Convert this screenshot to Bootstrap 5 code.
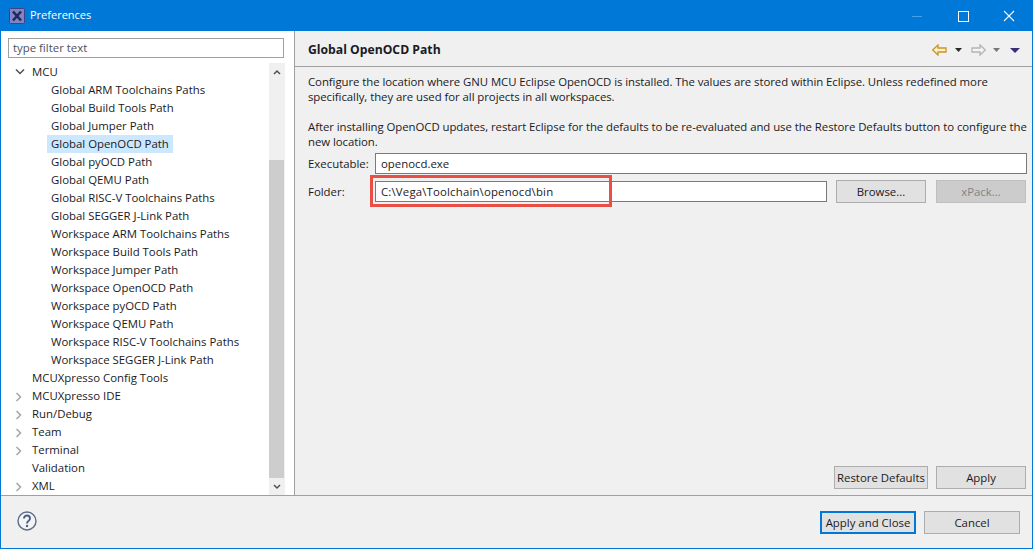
<!DOCTYPE html>
<html><head><meta charset="utf-8">
<link rel="stylesheet" href="https://cdn.jsdelivr.net/npm/bootstrap@5.3.0/dist/css/bootstrap.min.css">
<style>
html,body{height:100%;margin:0}
body{background:#f0f0f0;font-family:"Open Sans","Noto Sans",sans-serif;font-size:11.4px;line-height:18px;color:#1a1a24}
.win{width:1033px;height:549px;border:1px solid #0078d7;border-top:0;overflow:hidden}
.titlebar{height:31px;background:#0078d7;color:#fff;padding-left:8px;gap:5px;flex:none}
.titletxt{font-size:11px;margin-top:-1px}
.winbtns{margin-left:auto}
.winbtn{width:46px;height:31px}
.main{height:465px;border-bottom:1px solid #a0a0a0;flex:none}
.leftp{width:294px;background:#fff;padding:7px 9px 0 7px;border-right:1px solid #a0a0a0;flex:none}
.filter{height:20px;border:1px solid #a0a0a0;padding:0 4px;line-height:17px;color:#50505c;margin-bottom:5px;width:276px}
.treewrap{height:432px}
.tree{width:260px;overflow:hidden}
.trow{height:18px;padding-left:24px;position:relative;white-space:nowrap;line-height:17px}
.trow.sub{padding-left:43px}
.hl{display:inline-block;background:#cce8ff;padding:0 4px;margin-left:-4px;height:18px}
.twist{position:absolute;left:7px;top:5px}
.sbar{width:16px;background:#f0f0f0;display:flex;flex-direction:column}
.sbtn{height:17px;display:flex;align-items:center;justify-content:center}
.strack{flex:1;position:relative}
.sthumb{position:absolute;left:0;right:1px;top:80px;bottom:0;background:#cdcdcd}
.rightp{flex:1;min-width:0}
.rhead{height:36px;border-bottom:1px solid #a0a0a0;padding:3px 12px 0 13px}
.rtitle{font-weight:700;font-size:12.2px}
.navicons{margin-left:auto}
.navback{margin-right:8px}
.navarrow2{margin-left:9px;margin-right:7px}
.navmenu{margin-left:10px}
.rbody{padding:7px 5px 7px 13px;height:429px}
.desc{margin:0;line-height:15px;white-space:nowrap;letter-spacing:-.06px}
.desc2{margin-top:15px}
.fgrid{margin-top:4px}
.frow{height:21px;margin-bottom:7px}
.flbl{width:67px}
.fin{flex:1;height:21px;background:#fff;border:1px solid #7a7a7a;padding:0 5px;line-height:19px;min-width:0;position:relative}
.pathtxt{letter-spacing:.17px}
.wbtn{background:#e1e1e1;border:1px solid #adadad;border-radius:0;height:23px;padding:0;font-size:11.4px;line-height:19px;color:#1a1a24;width:90px;white-space:nowrap;flex:none}
.wbtn.dis{background:#cccccc;color:#838383;border-color:#bfbfbf}
.browse{margin-left:9px}
.xpack{margin-left:10px;margin-right:1px}
.redbox{position:absolute;left:-6px;top:-7px;width:242px;height:32px;border:3px solid #e94f45;pointer-events:none}
.rbtns{margin-top:auto;gap:8px;padding-right:1px}
.wide94{width:94px}
.foot{height:52px;padding:15px 12px 0 16px;flex:none}
.fbtns{gap:8px}
.fbtn{height:23px;width:96px}
.fbtn.def{border:2px solid #0078d7;line-height:17px}
</style></head><body>
<div class="win d-flex flex-column">
 <div class="titlebar d-flex align-items-center">
  <svg width="16" height="16" viewBox="0 0 16 16"><rect x=".5" y=".5" width="15" height="15" rx="1" fill="#7f85c2" stroke="#3f4386"/><path d="M4 3.5l8 9M12 3.5l-8 9" stroke="#23275f" stroke-width="2.6"/></svg>
  <span class="titletxt">Preferences</span>
  <div class="winbtns d-flex">
   <div class="winbtn d-flex align-items-center justify-content-center"><svg width="12" height="12"><path d="M1 6.5h10" stroke="#4aa0e6"/></svg></div>
   <div class="winbtn d-flex align-items-center justify-content-center"><svg width="12" height="12"><rect x="1.5" y="1.5" width="10" height="10" fill="none" stroke="#fff"/></svg></div>
   <div class="winbtn d-flex align-items-center justify-content-center"><svg width="12" height="12"><path d="M1 1l10 10M11 1L1 11" stroke="#fff" stroke-width="1.1"/></svg></div>
  </div>
 </div>
 <div class="main d-flex">
  <div class="leftp">
   <div class="filter">type filter text</div>
   <div class="treewrap d-flex">
    <div class="tree" id="tree"></div>
    <div class="sbar ms-auto">
     <div class="sbtn"><svg width="8" height="6"><path d="M1 5l3-3 3 3" fill="none" stroke="#505050" stroke-width="1.5"/></svg></div>
     <div class="strack"><div class="sthumb"></div></div>
     <div class="sbtn"><svg width="8" height="6"><path d="M1 1l3 3 3-3" fill="none" stroke="#505050" stroke-width="1.5"/></svg></div>
    </div>
   </div>
  </div>
  <div class="rightp">
   <div class="rhead d-flex align-items-center">
    <span class="rtitle">Global OpenOCD Path</span>
    <div class="navicons d-flex align-items-center">
     <svg class="navback" width="15" height="12" viewBox="0 0 15 12"><path d="M.7 6L6 1v3h8v4H6v3z" fill="#fdf3c4" stroke="#c8952c" stroke-width="1.3"/></svg>
     <svg width="7" height="4"><path d="M0 0h7L3.5 4z" fill="#2a2a2a"/></svg>
     <svg class="navarrow2" width="15" height="12" viewBox="0 0 15 12"><path d="M14.3 6L9 1v3H1v4h8v3z" fill="#f4f4f4" stroke="#b4b4b4" stroke-width="1.3"/></svg>
     <svg width="7" height="4"><path d="M0 0h7L3.5 4z" fill="#777"/></svg>
     <svg class="navmenu" width="10" height="5"><path d="M0 0h10L5 5z" fill="#3d2a78"/></svg>
    </div>
   </div>
   <div class="rbody d-flex flex-column">
    <p class="desc">Configure the location where GNU MCU Eclipse OpenOCD is installed. The values are stored within Eclipse. Unless redefined more<br>specifically, they are used for all projects in all workspaces.</p>
    <p class="desc desc2">After installing OpenOCD updates, restart Eclipse for the defaults to be re-evaluated and use the Restore Defaults button to configure the<br>new location.</p>
    <div class="fgrid">
     <div class="frow d-flex align-items-center"><span class="flbl">Executable:</span><div class="fin">openocd.exe</div></div>
     <div class="frow d-flex align-items-center"><span class="flbl">Folder:</span><div class="fin"><span class="pathtxt">C:\Vega\Toolchain\openocd\bin</span><div class="redbox"></div></div>
      <button class="wbtn browse" type="button">Browse...</button><button class="wbtn dis xpack" type="button">xPack...</button></div>
    </div>
    <div class="rbtns d-flex justify-content-end"><button class="wbtn wide94" type="button">Restore Defaults</button><button class="wbtn" type="button">Apply</button></div>
   </div>
  </div>
 </div>
 <div class="foot d-flex align-items-start">
  <svg width="20" height="20" viewBox="0 0 20 20"><circle cx="10" cy="10" r="9" fill="#f4f4f6" stroke="#5c6c88" stroke-width="1.4"/><path d="M7 7.5c0-4 6-4 6 0 0 2.4-3 2.4-3 5" fill="none" stroke="#4a5f80" stroke-width="1.9"/><circle cx="10" cy="15" r="1.2" fill="#4a5f80"/></svg>
  <div class="fbtns ms-auto d-flex"><button class="wbtn fbtn def" type="button">Apply and Close</button><button class="wbtn fbtn" type="button">Cancel</button></div>
 </div>
</div>
<script src="https://cdn.jsdelivr.net/npm/bootstrap@5.3.0/dist/js/bootstrap.bundle.min.js"></script>
<script>
const sub="Global ARM Toolchains Paths|Global Build Tools Path|Global Jumper Path|Global OpenOCD Path|Global pyOCD Path|Global QEMU Path|Global RISC-V Toolchains Paths|Global SEGGER J-Link Path|Workspace ARM Toolchains Paths|Workspace Build Tools Path|Workspace Jumper Path|Workspace OpenOCD Path|Workspace pyOCD Path|Workspace QEMU Path|Workspace RISC-V Toolchains Paths|Workspace SEGGER J-Link Path".split("|");
const top2=[["MCUXpresso Config Tools",0],["MCUXpresso IDE",1],["Run/Debug",1],["Team",1],["Terminal",1],["Validation",0],["XML",1]];
let h='<div class="trow"><svg class="twist" width="10" height="8"><path d="M1 1.5l4 4 4-4" fill="none" stroke="#505050" stroke-width="1.5"/></svg>MCU</div>';
sub.forEach((s,i)=>{h+='<div class="trow sub">'+(i==3?'<span class="hl">'+s+'</span>':s)+'</div>'});
top2.forEach(t=>{h+='<div class="trow">'+(t[1]?'<svg class="twist" width="8" height="10"><path d="M1.5 1l4 4-4 4" fill="none" stroke="#a8a8a8" stroke-width="1.6"/></svg>':'')+t[0]+'</div>'});
document.getElementById('tree').innerHTML=h;
</script>
</body></html>
